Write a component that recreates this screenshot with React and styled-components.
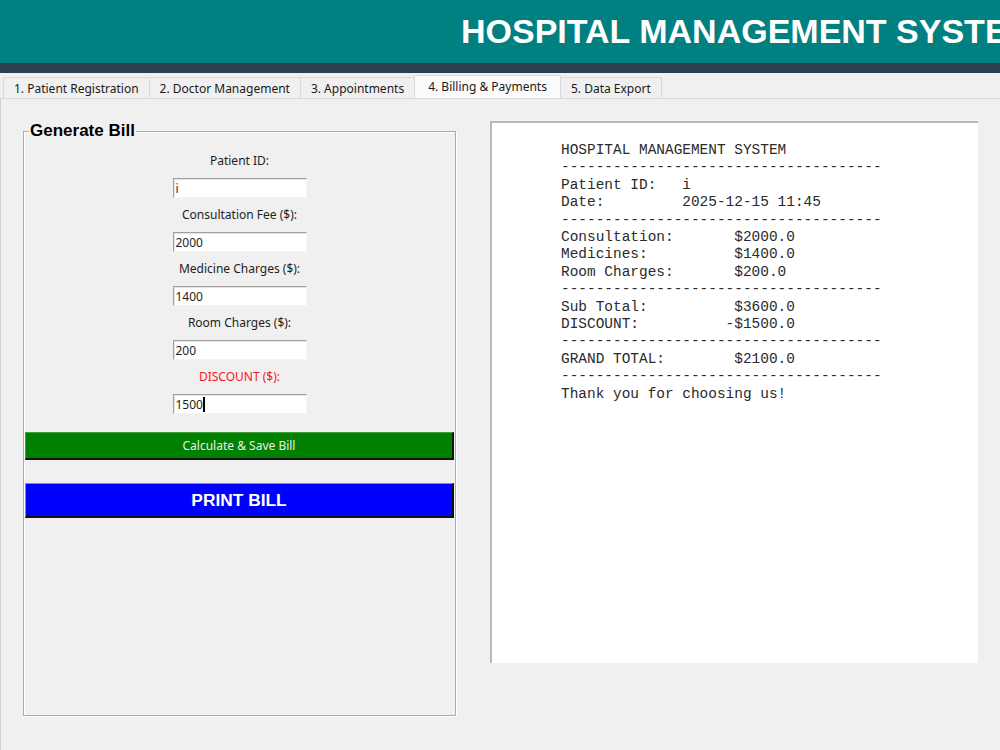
import React from "react";
import styled, { createGlobalStyle } from "styled-components";

const GlobalStyle = createGlobalStyle`
  html, body {
    margin: 0;
    padding: 0;
    background: #f0f0f0;
  }
  body {
    font-family: "Noto Sans", "Open Sans", sans-serif;
  }
  #root {
    width: 1000px;
    height: 750px;
    overflow: hidden;
  }
`;

const Window = styled.div`
  width: 1000px;
  height: 750px;
  display: flex;
  flex-direction: column;
  background: #f0f0f0;
  overflow: hidden;
`;

const Header = styled.header`
  height: 63px;
  flex-shrink: 0;
  background: #008080;
  display: flex;
  align-items: center;
  padding-left: 461px;
  padding-bottom: 1px;
  box-sizing: border-box;
  overflow: hidden;
  white-space: nowrap;
`;

const Title = styled.h1`
  margin: 0;
  font-family: "Liberation Sans", Arial, sans-serif;
  font-weight: 700;
  font-size: 34px;
  color: #ffffff;
`;

const Stripe = styled.div`
  height: 10px;
  flex-shrink: 0;
  background: #2c3e50;
`;

const TabBar = styled.nav`
  height: 25px;
  flex-shrink: 0;
  display: flex;
  align-items: flex-end;
  padding-left: 3px;
  box-sizing: border-box;
`;

const Tab = styled.div`
  height: ${(p) => (p.$active ? "23px" : "21px")};
  padding: ${(p) => (p.$active ? "0 13px 2px" : "0 10px")};
  display: flex;
  align-items: center;
  box-sizing: border-box;
  border: 1px solid #dadada;
  border-bottom: none;
  margin-left: -1px;
  background: ${(p) => (p.$active ? "#fbfbfb" : "#f0f0f0")};
  font-size: 12px;
  color: #1a1a1a;
  white-space: nowrap;

  &:first-child {
    margin-left: 0;
  }
`;

const Pane = styled.main`
  flex: 1;
  display: flex;
  align-items: flex-start;
  gap: 34px;
  padding: 22px 0 0 22px;
  border-top: 1px solid #dadada;
  border-left: 1px solid #cfcfcf;
  box-sizing: border-box;
`;

const BillFrame = styled.fieldset`
  width: 433px;
  height: 595px;
  margin: 0;
  padding: 11px 1px 0 1px;
  box-sizing: border-box;
  border: 1px solid #acacac;
  box-shadow: inset 1px 1px 0 #ffffff, 1px 1px 0 #ffffff;
  display: flex;
  flex-direction: column;
`;

const FrameTitle = styled.legend`
  margin-left: 4px;
  padding: 0 1px;
  font-family: "Liberation Sans", Arial, sans-serif;
  font-weight: 700;
  font-size: 17px;
  line-height: 20px;
  color: #000000;
`;

const Form = styled.div`
  display: flex;
  flex-direction: column;
  align-items: center;
  gap: 8px;
`;

const FieldLabel = styled.label`
  font-size: 12px;
  line-height: 18px;
  color: ${(p) => (p.$alert ? "#f01c24" : "#1e1e1e")};
`;

const Entry = styled.div`
  width: 134px;
  height: 20px;
  box-sizing: border-box;
  background: #ffffff;
  border-top: 1px solid #a0a0a0;
  border-left: 1px solid #a0a0a0;
  border-right: 1px solid #f4f4f4;
  border-bottom: 1px solid #f4f4f4;
  box-shadow: inset 1px 1px 0 #e3e3e3;
  padding-left: 2px;
  display: flex;
  align-items: center;
  font-size: 12px;
  color: #1e1e1e;
`;

const Caret = styled.span`
  width: 2px;
  height: 15px;
  background: #000000;
`;

const Actions = styled.div`
  display: flex;
  flex-direction: column;
  gap: 23px;
  margin-top: 18px;
`;

const ActionButton = styled.button`
  height: ${(p) => p.$height}px;
  width: 100%;
  margin: 0;
  padding: 0;
  box-sizing: border-box;
  background: ${(p) => p.$bg};
  border-top: 1px solid ${(p) => p.$light};
  border-left: 1px solid ${(p) => p.$light};
  border-right: 2px solid #111111;
  border-bottom: 2px solid #111111;
  color: ${(p) => p.$fg};
  font-family: ${(p) =>
    p.$strong
      ? '"Liberation Sans", Arial, sans-serif'
      : '"Noto Sans", "Open Sans", sans-serif'};
  font-weight: ${(p) => (p.$strong ? 700 : 400)};
  font-size: ${(p) => (p.$strong ? "17.33px" : "12px")};
  cursor: pointer;
`;

const Receipt = styled.pre`
  width: 488px;
  height: 542px;
  margin: 0;
  box-sizing: border-box;
  background: #ffffff;
  border-top: 2px solid #b9b9b9;
  border-left: 2px solid #b9b9b9;
  padding: 19px 0 0 69px;
  font-family: "Liberation Mono", "Courier New", monospace;
  font-size: 14.45px;
  line-height: 17.4px;
  color: #2a2a2a;
  overflow: hidden;
`;

const tabs = [
  "1. Patient Registration",
  "2. Doctor Management",
  "3. Appointments",
  "4. Billing & Payments",
  "5. Data Export",
];

const fields = [
  { label: "Patient ID:", value: "i" },
  { label: "Consultation Fee ($):", value: "2000" },
  { label: "Medicine Charges ($):", value: "1400" },
  { label: "Room Charges ($):", value: "200" },
  { label: "DISCOUNT ($):", value: "1500", alert: true, focused: true },
];

const rule = "-".repeat(37);

const receiptText = [
  "HOSPITAL MANAGEMENT SYSTEM",
  rule,
  "Patient ID:   i",
  "Date:         2025-12-15 11:45",
  rule,
  "Consultation:       $2000.0",
  "Medicines:          $1400.0",
  "Room Charges:       $200.0",
  rule,
  "Sub Total:          $3600.0",
  "DISCOUNT:          -$1500.0",
  rule,
  "GRAND TOTAL:        $2100.0",
  rule,
  "Thank you for choosing us!",
].join("\n");

export default function App() {
  return (
    <>
      <GlobalStyle />
      <Window>
        <Header>
          <Title>HOSPITAL MANAGEMENT SYSTEM</Title>
        </Header>
        <Stripe />
        <TabBar>
          {tabs.map((t, i) => (
            <Tab key={t} $active={i === 3}>
              {t}
            </Tab>
          ))}
        </TabBar>
        <Pane>
          <BillFrame>
            <FrameTitle>Generate Bill</FrameTitle>
            <Form>
              {fields.map((f) => (
                <React.Fragment key={f.label}>
                  <FieldLabel $alert={f.alert}>{f.label}</FieldLabel>
                  <Entry>
                    {f.value}
                    {f.focused && <Caret />}
                  </Entry>
                </React.Fragment>
              ))}
            </Form>
            <Actions>
              <ActionButton
                $height={28}
                $bg="#008000"
                $light="#3c9f3c"
                $fg="#ececec"
              >
                Calculate &amp; Save Bill
              </ActionButton>
              <ActionButton
                $height={35}
                $bg="#0000ff"
                $light="#8080ff"
                $fg="#ffffff"
                $strong
              >
                PRINT BILL
              </ActionButton>
            </Actions>
          </BillFrame>
          <Receipt>{receiptText}</Receipt>
        </Pane>
      </Window>
    </>
  );
}
